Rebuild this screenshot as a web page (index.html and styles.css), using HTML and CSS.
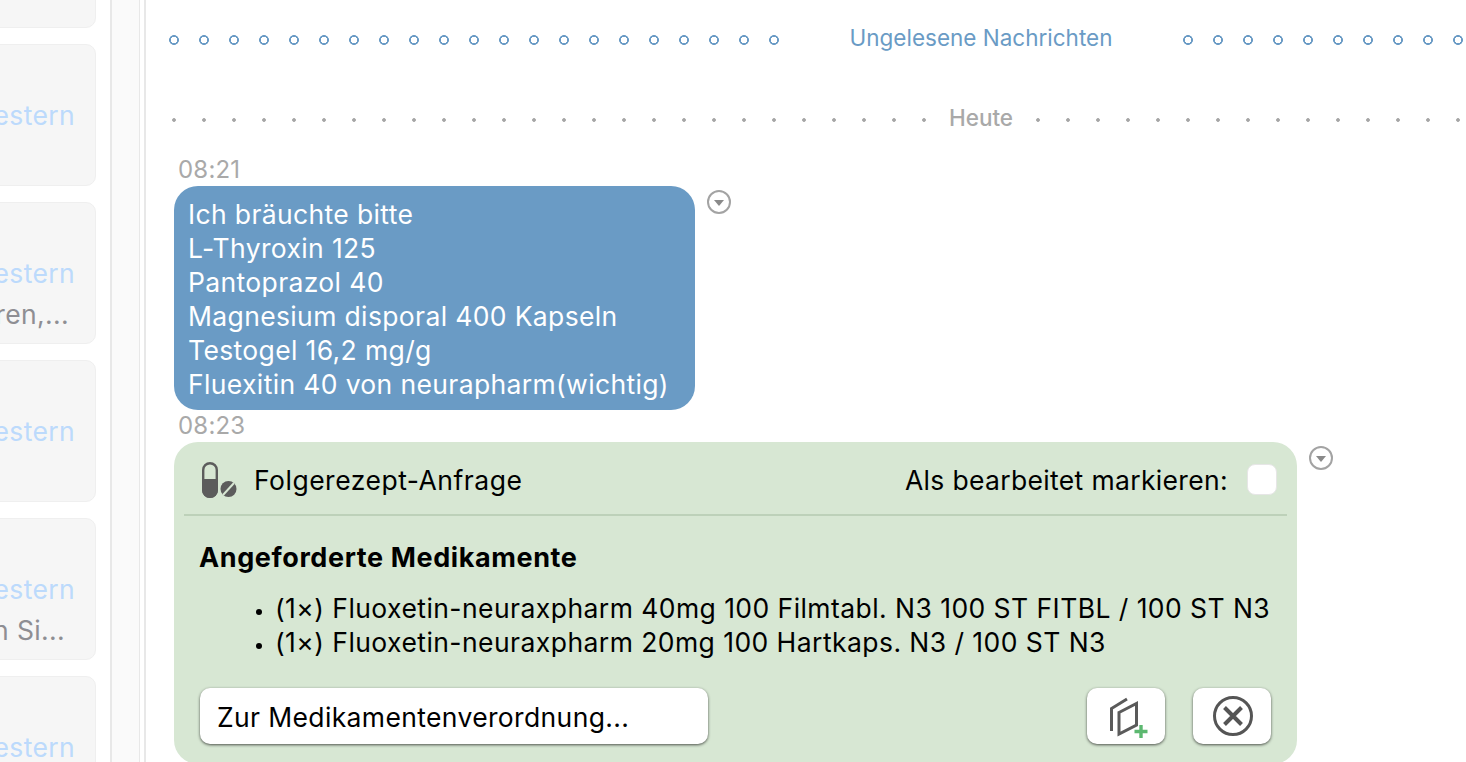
FILE: index.html
```html
<!DOCTYPE html>
<html lang="de">
<head>
<meta charset="utf-8">
<title>Nachrichten</title>
<link rel="stylesheet" href="styles.css">
</head>
<body>
<div class="app">
  <aside class="sidebar">
    <div class="card"></div>
    <div class="card"><div class="name">Western</div></div>
    <div class="card"><div class="name">Western</div><div class="preview">Haaren,...</div></div>
    <div class="card"><div class="name">Western</div></div>
    <div class="card"><div class="name">Western</div><div class="preview preview-alt">von Si...</div></div>
    <div class="card"><div class="name">Western</div></div>
  </aside>
  <div class="strip"></div>
  <div class="gutter"></div>
  <main class="main">
    <div class="sep unread">
      <div class="dots"></div>
      <div class="sep-label">Ungelesene Nachrichten</div>
      <div class="dots"></div>
    </div>
    <div class="sep today">
      <div class="dots"></div>
      <div class="sep-label">Heute</div>
      <div class="dots"></div>
    </div>
    <div class="msgs">
      <div class="time">08:21</div>
      <div class="row">
        <div class="bubble">Ich bräuchte bitte<br>L-Thyroxin 125<br>Pantoprazol 40<br>Magnesium disporal 400 Kapseln<br>Testogel 16,2 mg/g<br>Fluexitin 40 von neurapharm(wichtig)</div>
        <svg class="chev" viewBox="0 0 24 24"><circle cx="12" cy="12" r="11" fill="none" stroke="#a3a3a3" stroke-width="2"/><path d="M7 10h10L12 16z" fill="#8a8a8a"/></svg>
      </div>
      <div class="time">08:23</div>
      <div class="row">
        <section class="rx">
          <header class="rx-head">
            <svg class="pill" viewBox="0 0 36 36"><rect x="1.200" y="1.200" width="13.600" height="33.600" rx="6.800" fill="none" stroke="#5c5c5c" stroke-width="2.400"/><path d="M0 17h16v11a8 8 0 0 1-16 0z" fill="#5c5c5c"/><circle cx="26.500" cy="27" r="8" fill="#5c5c5c"/><path d="M21 33L32 21" stroke="#d7e7d3" stroke-width="2"/></svg>
            <span class="rx-title">Folgerezept-Anfrage</span>
            <span class="rx-mark">Als bearbeitet markieren:</span>
            <span class="check"></span>
          </header>
          <div class="rx-body">
            <h2 class="rx-h">Angeforderte Medikamente</h2>
            <ul class="rx-list">
              <li>(1×) Fluoxetin-neuraxpharm 40mg 100 Filmtabl. N3 100 ST FITBL / 100 ST N3</li>
              <li>(1×) Fluoxetin-neuraxpharm 20mg 100 Hartkaps. N3 / 100 ST N3</li>
            </ul>
            <div class="actions">
              <div class="select">Zur Medikamentenverordnung...</div>
              <button class="btn add" type="button">
                <svg viewBox="0 0 78 56"><path d="M40 11L24.500 20.500V43" fill="none" stroke="#5a5a5a" stroke-width="3"/><path d="M32 24.500L49.500 15.500V37L32 46z" fill="none" stroke="#5a5a5a" stroke-width="3"/><path d="M54 37v13M47.500 43.500h13" stroke="#5cb870" stroke-width="3.400"/></svg>
              </button>
              <button class="btn close" type="button">
                <svg viewBox="0 0 78 56"><circle cx="40" cy="28" r="18.500" fill="none" stroke="#555" stroke-width="3"/><path d="M31.500 19.500L48.500 36.500M48.500 19.500L31.500 36.500" stroke="#555" stroke-width="4"/></svg>
              </button>
            </div>
          </div>
        </section>
        <svg class="chev" viewBox="0 0 24 24"><circle cx="12" cy="12" r="11" fill="none" stroke="#a3a3a3" stroke-width="2"/><path d="M7 10h10L12 16z" fill="#8a8a8a"/></svg>
      </div>
    </div>
  </main>
</div>
</body>
</html>
```

FILE: styles.css
```css
* { box-sizing: border-box; }
html, body { margin: 0; height: 100%; overflow: hidden; background: #fff; }
body { font-family: Inter, "Noto Sans", "Liberation Sans", sans-serif; color: #000; }
.app { display: flex; width: 1466px; height: 762px; overflow: hidden; }

.sidebar { flex: none; width: 112px; height: 762px; border-right: 2px solid #e8e8e8; overflow: hidden; }
.card {
  width: 200px; height: 142px; margin: 0 0 16px -104px;
  padding: 53px 20px 0 0; text-align: right; white-space: nowrap;
  background: #f6f6f6; border: 1px solid #efefef; border-radius: 10px;
}
.card:first-child { margin-top: -114px; }
.name { font-size: 26.500px; letter-spacing: .35px; line-height: 34px; color: #bcdafc; }
.preview { font-size: 26.500px; letter-spacing: .35px; line-height: 34px; margin-top: 7px; padding-right: 6px; color: #8e8e93; }
.preview-alt { padding-right: 10px; }

.strip { flex: none; width: 28px; background: #fafafa; border-right: 1px solid #e8e8e8; }
.gutter { flex: none; width: 6px; border-right: 2px solid #e8e8e8; }

.main { flex: none; width: 1320px; padding: 21px 0 0 23px; }
.sep { display: grid; grid-template-columns: 1fr auto 1fr; align-items: center; width: 1624px; line-height: 34px; }
.sep-label { white-space: nowrap; }
.dots { background-repeat: repeat-x; }
.unread { color: #6a9bc5; font-size: 22.500px; }
.unread .sep-label { padding: 0 71px; }
.unread .dots {
  height: 10px; margin-top: 4px; background-size: 30px 10px;
  background-image: radial-gradient(circle at 5px 5px, transparent 3px, #6a9bc5 3.400px, #6a9bc5 4.600px, transparent 5.200px);
}
.today { margin-top: 46px; color: #a9a9a9; font-size: 22.500px; font-weight: 500; }
.today .sep-label { padding: 0 23px; }
.today .dots {
  height: 4px; margin-top: 4px; background-size: 30px 4px;
  background-image: radial-gradient(circle at 2px 2px, #a6a6a6 1.500px, transparent 2.200px);
}
.today .dots:first-child { background-position: 3px 0; }

.msgs { margin: 19px 0 0 5px; }
.time { padding-left: 4px; font-size: 24px; letter-spacing: .2px; line-height: 32px; height: 32px; color: #a9a9a9; }
.row { display: flex; align-items: flex-start; }
.bubble {
  padding: 11px 26px 9px 14px; border-radius: 24px; background: #6a9bc5; color: #fff;
  font-size: 26.500px; letter-spacing: .36px; line-height: 34px; white-space: nowrap;
}
.chev { flex: none; width: 24px; height: 24px; margin: 4px 0 0 12px; }

.rx { width: 1123px; padding: 0 10px; border-radius: 24px; background: #d7e7d3; font-size: 26.500px; letter-spacing: .36px; line-height: 34px; }
.rx-head { display: flex; align-items: center; height: 74px; padding: 3px 10px 0 18px; border-bottom: 2px solid #bdd1b9; }
.pill { width: 36px; height: 36px; flex: none; }
.rx-title { margin-left: 16px; letter-spacing: .5px; }
.rx-mark { margin-left: auto; letter-spacing: .34px; }
.check { width: 30px; height: 31px; margin-left: 19px; border-radius: 8px; background: #fff; border: 1px solid #e6e6e6; }
.rx-body { padding: 25px 15px 20px; }
.rx-h { margin: 0; font-size: 27px; letter-spacing: .6px; line-height: 34px; font-weight: 700; }
.rx-list { margin: 16px 0 0; padding: 0 0 0 76px; letter-spacing: .44px; }
.rx-list li::marker { font-size: 19px; }
.actions { display: flex; align-items: center; margin-top: 29px; padding-left: 1px; }
.select {
  width: 508px; height: 56px; padding-left: 17px; border-radius: 10px; background: #fff;
  line-height: 58px; box-shadow: 0 1px 3px rgba(0, 0, 0, .65);
}
.btn {
  width: 78px; height: 56px; padding: 0; border: 0; border-radius: 10px; background: #fff;
  box-shadow: 0 1px 3px rgba(0, 0, 0, .65);
}
.btn svg { display: block; width: 78px; height: 56px; }
.add { margin-left: auto; }
.close { margin-left: 28px; margin-right: 1px; }
```
